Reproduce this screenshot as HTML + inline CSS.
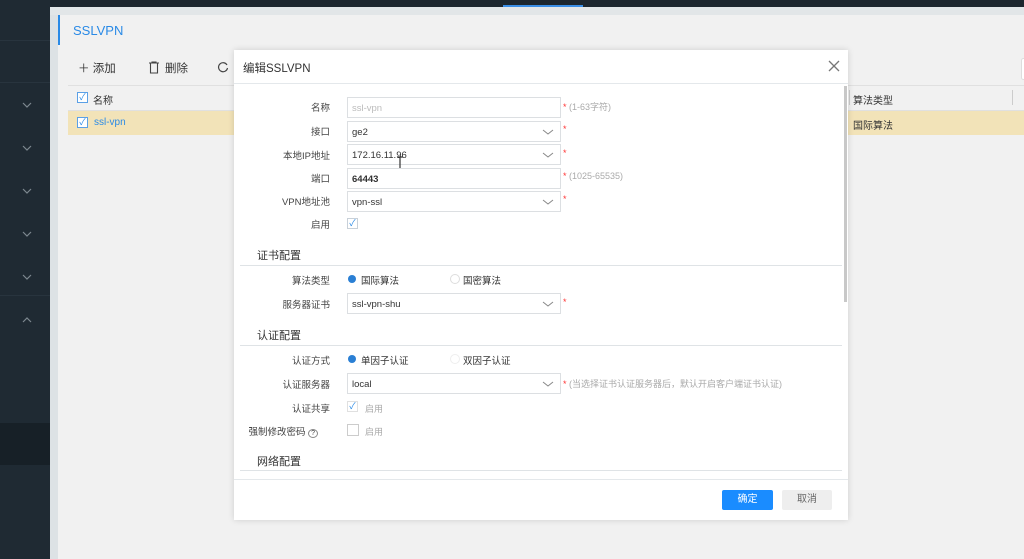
<!DOCTYPE html>
<html><head><meta charset="utf-8"><style>
*{margin:0;padding:0;box-sizing:border-box}
body{width:1024px;height:559px;overflow:hidden;background:#f1f1f1;font-family:"Liberation Sans","Noto Sans CJK SC",sans-serif;font-size:10px;color:#333;position:relative}
.a{position:absolute}
.lbl{position:absolute;width:100px;text-align:right;left:230px;font-size:9.5px;color:#444}
.inp{position:absolute;left:347px;width:214px;height:21px;border:1px solid #dcdfe2;background:#fff;font-size:9.5px;padding:5px 0 0 4px;color:#333}
.chev{position:absolute;right:6px;top:5px;width:12px;height:10px}
.star{position:absolute;left:563px;color:#f33;font-size:9px}
.hint{color:#aaa;font-size:9px}
.sec{position:absolute;left:257px;font-size:11px;color:#333}
.line{position:absolute;left:240px;width:602px;height:1px;background:#dfe3e6}
.cb{position:absolute;width:11px;height:11px;border:1px solid #c8d0d8;background:#fff}
</style></head><body>
<div class="a" style="left:0;top:0;width:1024px;height:7px;background:#1c262e"></div>
<div class="a" style="left:503px;top:5px;width:80px;height:2px;background:#3a8ee6"></div>
<div class="a" style="left:0;top:0;width:50px;height:559px;background:#1f2a33"></div>
<div class="a" style="left:0;top:40px;width:50px;height:1px;background:#28343e"></div>
<div class="a" style="left:0;top:82px;width:50px;height:1px;background:#28343e"></div>
<div class="a" style="left:0;top:295px;width:50px;height:1px;background:#28343e"></div>
<div class="a" style="left:0;top:423px;width:50px;height:42px;background:#172027"></div>
<div class="a" style="left:50px;top:7px;width:8px;height:552px;background:#dde2e5"></div>
<div class="a" style="left:50px;top:7px;width:974px;height:8px;background:#e2e6e8"></div>
<svg class="a" style="left:0;top:0" width="50" height="559"><g stroke="#7d8890" fill="none" stroke-width="1.2"><path d="M23 103l4 4 4-4M23 146l4 4 4-4M23 189l4 4 4-4M23 232l4 4 4-4M23 275l4 4 4-4M23 322l4-4 4 4"/></g></svg>
<div class="a" style="left:58px;top:15px;width:2px;height:30px;background:#2a8ae6"></div>
<div class="a" style="left:73px;top:23px;font-size:13px;color:#2a8ae6">SSLVPN</div>
<div class="a" style="left:78px;top:60px;font-size:11.5px;color:#333">＋ 添加</div>
<svg class="a" style="left:148px;top:61px" width="12" height="13"><path d="M1 2h10M4 2V1h4v1M2.5 2.5v9.5h7V2.5" stroke="#444" fill="none" stroke-width="1.1"/></svg>
<div class="a" style="left:165px;top:60px;font-size:11.5px;color:#333">删除</div>
<svg class="a" style="left:217px;top:61px" width="12" height="12"><path d="M10 4A4.5 4.5 0 1 0 10.5 7" stroke="#444" fill="none" stroke-width="1.2"/></svg>
<div class="a" style="left:68px;top:85px;width:956px;height:26px;border-top:1px solid #e0e0e0;border-bottom:1px solid #e0e0e0"></div>
<div class="a" style="left:68px;top:111px;width:956px;height:24px;background:#f2e3b8"></div>
<div class="cb" style="left:77px;top:92px;border-color:#5aa0e6;font-size:9px;color:#2a8ae6;line-height:9px;text-align:center">✓</div>
<div class="a" style="left:93px;top:92px">名称</div>
<div class="cb" style="left:77px;top:117px;border-color:#5aa0e6;font-size:9px;color:#2a8ae6;line-height:9px;text-align:center">✓</div>
<div class="a" style="left:94px;top:117px;color:#2a8ae6">ssl-vpn</div>
<div class="a" style="left:849px;top:90px;width:1px;height:15px;background:#ccc"></div>
<div class="a" style="left:853px;top:92px">算法类型</div>
<div class="a" style="left:1012px;top:90px;width:1px;height:15px;background:#ccc"></div>
<div class="a" style="left:853px;top:117px">国际算法</div>
<div class="a" style="left:1021px;top:58px;width:5px;height:22px;border:1px solid #ddd;border-radius:3px;background:#fff"></div>

<div class="a" style="left:234px;top:50px;width:614px;height:470px;background:#fff;box-shadow:0 0 6px rgba(0,0,0,.15)"></div>
<div class="a" style="left:234px;top:83px;width:614px;height:1px;background:#e4e8eb"></div>
<div class="a" style="left:243px;top:60px;font-size:11.5px;color:#333">编辑SSLVPN</div>
<svg class="a" style="left:827px;top:59px" width="14" height="14"><path d="M2 2l10 10M12 2L2 12" stroke="#777" stroke-width="1.3"/></svg>
<div class="a" style="left:844px;top:86px;width:3px;height:216px;background:#c8c8c8"></div>
<div class="a" style="left:234px;top:479px;width:614px;height:1px;background:#e4e8eb"></div>

<div class="lbl" style="top:100px">名称</div>
<div class="inp" style="top:97px;color:#bbb">ssl-vpn</div><div class="star" style="top:100px">* <span class="hint">(1-63字符)</span></div>
<div class="lbl" style="top:124px">接口</div>
<div class="inp" style="top:121px">ge2<svg class="chev"><path d="M1 3l5 4 5-4" stroke="#888" fill="none"/></svg></div><div class="star" style="top:124px">*</div>
<div class="lbl" style="top:148px">本地IP地址</div>
<div class="inp" style="top:144px">172.16.11.96<svg class="chev"><path d="M1 3l5 4 5-4" stroke="#888" fill="none"/></svg></div><div class="star" style="top:148px">*</div>
<svg class="a" style="left:396px;top:156px" width="8" height="20"><path d="M1 1h6M4 1v17M1 18h6" stroke="#333" stroke-width="1.2" fill="none"/></svg>
<div class="lbl" style="top:171px">端口</div>
<div class="inp" style="top:168px;font-weight:bold">64443</div><div class="star" style="top:171px">* <span class="hint">(1025-65535)</span></div>
<div class="lbl" style="top:194px">VPN地址池</div>
<div class="inp" style="top:191px">vpn-ssl<svg class="chev"><path d="M1 3l5 4 5-4" stroke="#888" fill="none"/></svg></div><div class="star" style="top:194px">*</div>
<div class="lbl" style="top:217px">启用</div>
<div class="cb" style="left:347px;top:218px;color:#2a8ae6;font-size:9px;line-height:9px;text-align:center">✓</div>

<div class="sec" style="top:247px">证书配置</div><div class="line" style="top:265px"></div>
<div class="lbl" style="top:273px">算法类型</div>
<div class="a" style="left:348px;top:275px;width:8px;height:8px;border-radius:50%;background:#2a7fd4"></div>
<div class="a" style="left:361px;top:273px;font-size:9.5px">国际算法</div>
<div class="a" style="left:450px;top:274px;width:10px;height:10px;border-radius:50%;border:1px solid #ddd"></div>
<div class="a" style="left:463px;top:273px;font-size:9.5px">国密算法</div>
<div class="lbl" style="top:297px">服务器证书</div>
<div class="inp" style="top:293px">ssl-vpn-shu<svg class="chev"><path d="M1 3l5 4 5-4" stroke="#888" fill="none"/></svg></div><div class="star" style="top:297px">*</div>

<div class="sec" style="top:327px">认证配置</div><div class="line" style="top:345px"></div>
<div class="lbl" style="top:353px">认证方式</div>
<div class="a" style="left:348px;top:355px;width:8px;height:8px;border-radius:50%;background:#2a7fd4"></div>
<div class="a" style="left:361px;top:353px;font-size:9.5px">单因子认证</div>
<div class="a" style="left:450px;top:354px;width:10px;height:10px;border-radius:50%;border:1px solid #eee"></div>
<div class="a" style="left:463px;top:353px;font-size:9.5px">双因子认证</div>
<div class="lbl" style="top:377px">认证服务器</div>
<div class="inp" style="top:373px">local<svg class="chev"><path d="M1 3l5 4 5-4" stroke="#888" fill="none"/></svg></div><div class="star" style="top:377px">* <span class="hint">(当选择证书认证服务器后，默认开启客户端证书认证)</span></div>
<div class="lbl" style="top:401px">认证共享</div>
<div class="cb" style="left:347px;top:401px;color:#2a8ae6;font-size:9px;line-height:9px;text-align:center;border-color:#e0e0e0">✓</div>
<div class="a hint" style="left:365px;top:402px">启用</div>
<div class="lbl" style="top:424px;left:218px">强制修改密码 <span style="border:1px solid #888;border-radius:50%;font-size:7px;padding:0 2px">?</span></div>
<div class="cb" style="left:347px;top:424px;width:12px;height:12px;border-color:#ccc"></div>
<div class="a hint" style="left:365px;top:425px">启用</div>

<div class="sec" style="top:453px">网络配置</div><div class="line" style="top:470px"></div>

<div class="a" style="left:722px;top:490px;width:51px;height:20px;background:#1a8cff;border-radius:2px;color:#fff;font-size:10px;text-align:center;line-height:20px">确定</div>
<div class="a" style="left:782px;top:490px;width:50px;height:20px;background:#eee;border-radius:2px;color:#666;font-size:10px;text-align:center;line-height:20px">取消</div>
</body></html>
